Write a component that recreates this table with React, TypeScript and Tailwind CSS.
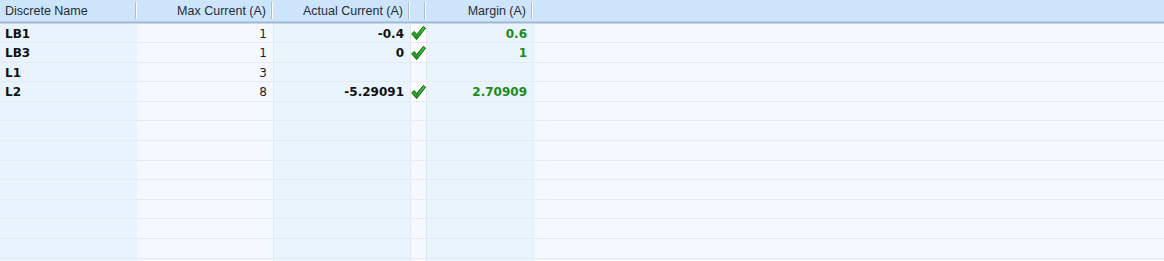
import React from "react";

type Row = { name: string; max: string; actual?: string; margin?: string; ok?: boolean };

const rows: Row[] = [
  { name: "LB1", max: "1", actual: "-0.4", margin: "0.6", ok: true },
  { name: "LB3", max: "1", actual: "0", margin: "1", ok: true },
  { name: "L1", max: "3" },
  { name: "L2", max: "8", actual: "-5.29091", margin: "2.70909", ok: true },
];

const heights = [
  "h-[19px]", "h-[20px]", "h-[19px]", "h-[20px]", "h-[19px]", "h-[20px]",
  "h-[20px]", "h-[19px]", "h-[20px]", "h-[19px]", "h-[20px]", "h-[20px]", "h-[19px]",
];

function Check() {
  return (
    <svg width="16" height="16" viewBox="0 0 16 16">
      <defs>
        <linearGradient id="cg" x1="0" y1="0" x2="0" y2="1">
          <stop offset="0" stopColor="#44cc44" />
          <stop offset="1" stopColor="#129012" />
        </linearGradient>
      </defs>
      <polygon
        points="0.7,8.8 3.5,6.4 6,9.6 13.3,0.9 15.5,2.8 6,15"
        fill="url(#cg)"
        stroke="#0a560a"
        strokeWidth="1"
        strokeLinejoin="round"
      />
    </svg>
  );
}

function HeadCell({ w, text, align }: { w: string; text?: string; align?: "left" | "right" }) {
  return (
    <div className={`${w} shrink-0 flex items-center h-full`}>
      <div className={`flex-1 min-w-0 truncate pt-[2px] ${align === "left" ? "text-left pl-[5px]" : "text-right pr-[5px]"}`}>
        {text}
      </div>
      <div className="w-[2px] h-[17px] border-l border-[#a9bfd6] bg-white shrink-0" />
    </div>
  );
}

export default function App() {
  return (
    <div className="w-[1164px] h-[261px] overflow-hidden bg-[#f3f8fe] text-[#1d2733] [font-family:'DejaVu_Sans',sans-serif]">
      <div className="h-[21px] bg-[#cde5fb] flex items-center text-[#1f2b38] text-[12.5px] [font-family:'Liberation_Sans',Arial,sans-serif]">
        <HeadCell w="w-[137px]" text="Discrete Name" align="left" />
        <HeadCell w="w-[136px]" text="Max Current (A)" />
        <HeadCell w="w-[137px]" text="Actual Current (A)" />
        <HeadCell w="w-[16px]" />
        <HeadCell w="w-[107px]" text="Margin (A)" />
        <div className="flex-1" />
      </div>
      <div className="h-[1px] bg-[#b7cde4]" />
      <div className="h-[1px] bg-[#9fb6cf]" />
      <div className="h-[1px] bg-[#c6d9ec]" />
      {heights.map((h, i) => {
        const r = rows[i];
        return (
          <div key={i} className={`${h} flex border-b border-[#e6ebf1] text-[12px] leading-none`}>
            <div className="w-[137px] shrink-0 bg-[#e8f3fe] pl-[5px] pt-[1px] flex items-center font-bold text-[#111]">
              {r?.name}
            </div>
            <div className="w-[136px] shrink-0 bg-[#f4f9ff] pr-[6px] pt-[1px] flex items-center justify-end text-[#2a1a1a]">
              {r?.max}
            </div>
            <div className="w-[137px] shrink-0 bg-[#e9f4fe] border-l border-[#e3e8ee] pr-[6px] pt-[1px] flex items-center justify-end font-bold text-[#111]">
              {r?.actual}
            </div>
            <div className={`w-[16px] shrink-0 border-l border-[#e3e8ee] flex items-center justify-center ${r?.ok ? "bg-white" : "bg-[#f4f9ff]"}`}>
              {r?.ok ? <Check /> : null}
            </div>
            <div className="w-[107px] shrink-0 bg-[#e9f4fe] border-l border-[#e3e8ee] pr-[6px] pt-[1px] flex items-center justify-end font-bold text-[#1a8a1a]">
              {r?.margin}
            </div>
            <div className="flex-1 bg-[#f4f9ff] border-l border-[#e8ecf1]" />
          </div>
        );
      })}
    </div>
  );
}
